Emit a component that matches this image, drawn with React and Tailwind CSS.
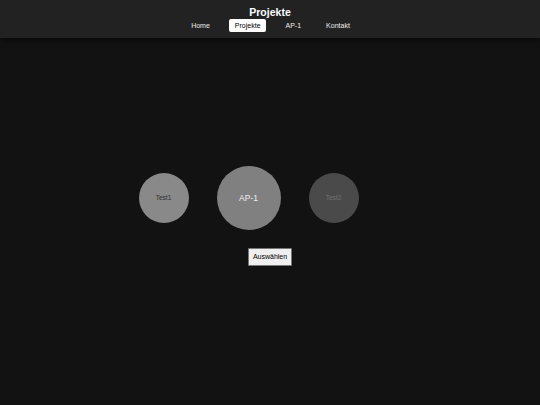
export default function App() {
  const font = { fontFamily: '"Liberation Sans", Arial, sans-serif' };
  return (
    <div style={font} className="w-[540px] h-[405px] bg-[#121212] flex flex-col overflow-hidden">
      <header className="relative z-10 h-[38px] bg-[#222222] shadow-[0_2px_6px_rgba(0,0,0,0.6)] flex flex-col items-center pt-[6px]">
        <h1 className="text-[10.5px] leading-[12px] font-bold text-white">Projekte</h1>
        <nav className="mt-[1px] flex items-center gap-[14px] text-[7px] leading-[13px] pl-[1px]">
          <a className="px-[5.5px] text-[#ececec]">Home</a>
          <a className="px-[5.5px] rounded-[2px] bg-white text-black">Projekte</a>
          <a className="px-[5.5px] text-[#ececec]">AP-1</a>
          <a className="px-[5.5px] text-[#ececec]">Kontakt</a>
        </nav>
      </header>
      <main className="flex-1 flex flex-col items-center pt-[128px]">
        <div className="flex items-center gap-[28px] pr-[43px]">
          <div className="w-[50px] h-[50px] rounded-full bg-[#898989] flex items-center justify-center text-[6.5px] text-[#2e2e2e]">Test1</div>
          <div className="w-[64px] h-[64px] rounded-full bg-[#808080] flex items-center justify-center text-[8.5px] text-[#f0f0f0]">AP-1</div>
          <div className="w-[50px] h-[50px] rounded-full bg-[#4a4a4a] flex items-center justify-center text-[6.5px] text-[#727272]">Test2</div>
        </div>
        <button className="mt-[18px] h-[18px] px-[4px] bg-[#efefef] border border-[#767676] rounded-[1px] text-[7px] text-black">Auswählen</button>
      </main>
    </div>
  );
}
